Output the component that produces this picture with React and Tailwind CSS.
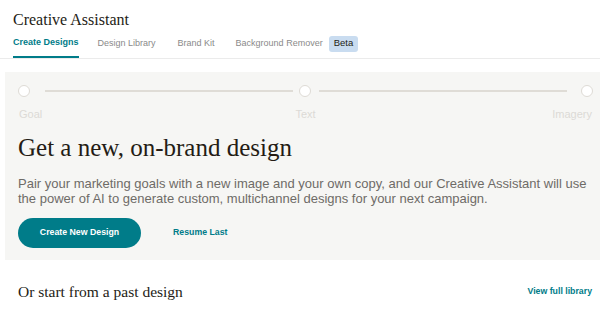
import React from 'react';

const serif = "font-['Liberation_Serif',serif]";
const sans = "font-['Liberation_Sans',Arial,sans-serif]";

const tabs = [
    { label: 'Create Designs', gap: 'mr-[19px]' },
    { label: 'Design Library', gap: 'mr-[22px]' },
    { label: 'Brand Kit', gap: 'mr-[21px]' },
    { label: 'Background Remover', gap: '' },
];

const Dot = () => (
    <span className="w-[12px] h-[12px] shrink-0 rounded-full bg-white border border-[#dedbd5]"></span>
);

const App = () => {
    return (
        <div className={`w-[600px] h-[311px] overflow-hidden bg-white ${sans}`}>
            <header className="border-b border-[#ebebeb]">
                <h1 className={`${serif} text-[16px] text-[#241c15] pl-[13px] pt-[10px] leading-[20px]`}>Creative Assistant</h1>
                <nav className="flex pl-[13px] mt-[4px] h-[24px]">
                    {tabs.map((t, i) => (
                        <div
                            key={t.label}
                            className={`h-full flex items-center pb-[5px] ${t.gap} ${i === 0 ? 'text-[9px] text-[#007c89] font-bold border-b-2 border-[#007c89]' : 'text-[9px] text-[#8a8a8a]'}`}
                        >
                            {t.label}
                            {i === 3 && (
                                <span className="ml-[6px] bg-[#c9dcf0] text-[#241c15] rounded-[3px] px-[5px] h-[16px] flex items-center text-[9.5px]">Beta</span>
                            )}
                        </div>
                    ))}
                </nav>
            </header>

            <section className="ml-[5px] mt-[13px] bg-[#f6f6f4] h-[188px] pl-[13px] pr-[7px] pt-[13px]">
                <div className="flex items-center">
                    <Dot />
                    <span className="flex-1 h-[2px] bg-[#dfdcd6] ml-[15px] mr-[6px]"></span>
                    <Dot />
                    <span className="flex-1 h-[2px] bg-[#dfdcd6] ml-[8px] mr-[14px]"></span>
                    <Dot />
                </div>
                <div className="grid grid-cols-3 text-[11px] text-[#dcdad6] mt-[10px] leading-[14px]">
                    <span className="pl-[1px]">Goal</span>
                    <span className="text-center">Text</span>
                    <span className="text-right pr-[1px]">Imagery</span>
                </div>
                <h2 className={`${serif} text-[25px] text-[#241c15] leading-[30px] mt-[12px]`}>Get a new, on-brand design</h2>
                <p className="text-[13px] leading-[15px] text-[#6e6b67] mt-[13px] pr-[6px]">
                    Pair your marketing goals with a new image and your own copy, and our Creative Assistant will use the power of AI to generate custom, multichannel designs for your next campaign.
                </p>
                <div className="flex items-center mt-[12px]">
                    <button className="h-[30px] w-[123px] rounded-full bg-[#007c89] text-white text-[8.75px] font-bold">Create New Design</button>
                    <button className="ml-[32px] text-[#007c89] text-[8.75px] font-bold">Resume Last</button>
                </div>
            </section>

            <div className="flex items-center justify-between pl-[18px] pr-[8px] mt-[20px]">
                <h3 className={`${serif} text-[15.5px] text-[#241c15]`}>Or start from a past design</h3>
                <a className="text-[8.75px] font-bold text-[#007c89]">View full library</a>
            </div>
        </div>
    );
};

export default App;
